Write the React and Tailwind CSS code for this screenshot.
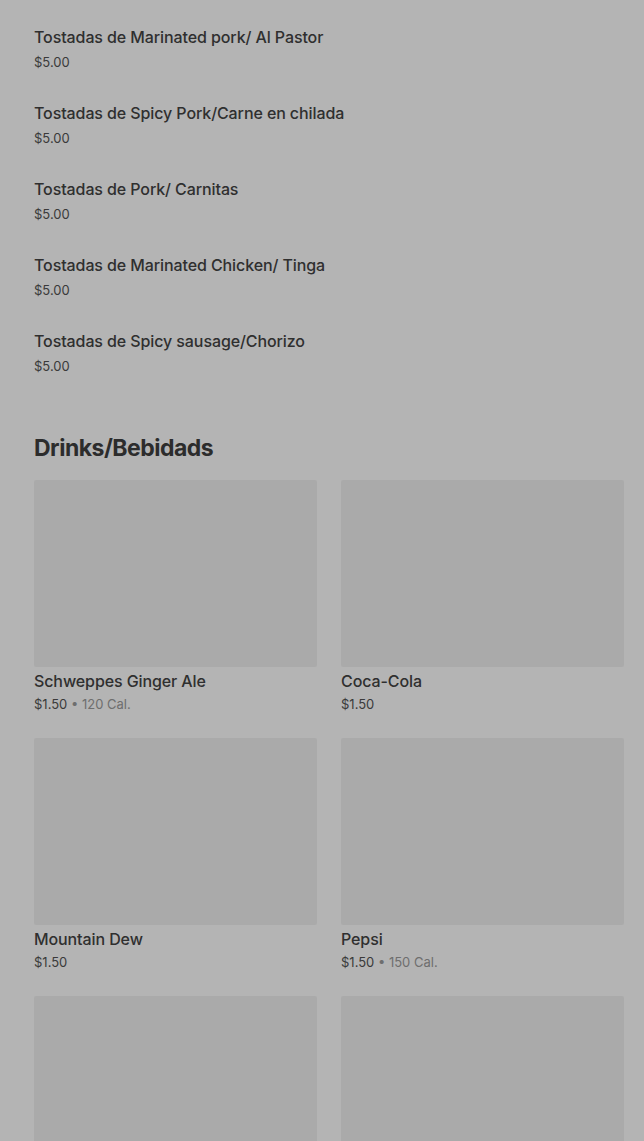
import React from 'react';

const tostadas = [
    'Tostadas de Marinated pork/ Al Pastor',
    'Tostadas de Spicy Pork/Carne en chilada',
    'Tostadas de Pork/ Carnitas',
    'Tostadas de Marinated Chicken/ Tinga',
    'Tostadas de Spicy sausage/Chorizo',
];

// last row is cut by the fold, only the images show
const drinks = [
    { name: 'Schweppes Ginger Ale', price: '$1.50', cal: '120 Cal.' },
    { name: 'Coca-Cola', price: '$1.50' },
    { name: 'Mountain Dew', price: '$1.50' },
    { name: 'Pepsi', price: '$1.50', cal: '150 Cal.' },
    { id: 'more-1' },
    { id: 'more-2' },
];

const App = () => {
    return (
        <div className="h-[1141px] overflow-hidden bg-[#b4b4b4] pl-[34px] pr-[20px] pt-[25px] text-[#2f2f2f]" style={{ fontFamily: 'Inter, "Noto Sans", sans-serif' }}>
            <ul>
                {tostadas.map((t) => (
                    <li key={t} className="pb-[29px]">
                        <p className="text-[16px] leading-6 font-medium tracking-[-0.1px]">{t}</p>
                        <p className="mt-[3px] text-[13px] leading-5 text-[#3a3a3a]">$5.00</p>
                    </li>
                ))}
            </ul>

            <h2 className="mt-[27px] text-[23px] leading-8 font-bold tracking-[-0.5px] text-[#2c2c2c]">Drinks/Bebidads</h2>

            <div className="mt-4 grid grid-cols-[283px_283px] gap-x-6 gap-y-6">
                {drinks.map((d) => (
                    <div key={d.name || d.id}>
                        <div className="h-[187px] rounded-[2px] bg-[#aaaaaa]" />
                        {d.name && (
                            <>
                                <p className="mt-[2px] text-[16px] leading-6 font-medium tracking-[-0.1px]">{d.name}</p>
                                <p className="mt-[1px] text-[13px] leading-5 text-[#3a3a3a]">
                                    {d.price}
                                    {d.cal && <span className="text-[#6e6e6e]"> • {d.cal}</span>}
                                </p>
                            </>
                        )}
                    </div>
                ))}
            </div>
        </div>
    );
};

export default App;
